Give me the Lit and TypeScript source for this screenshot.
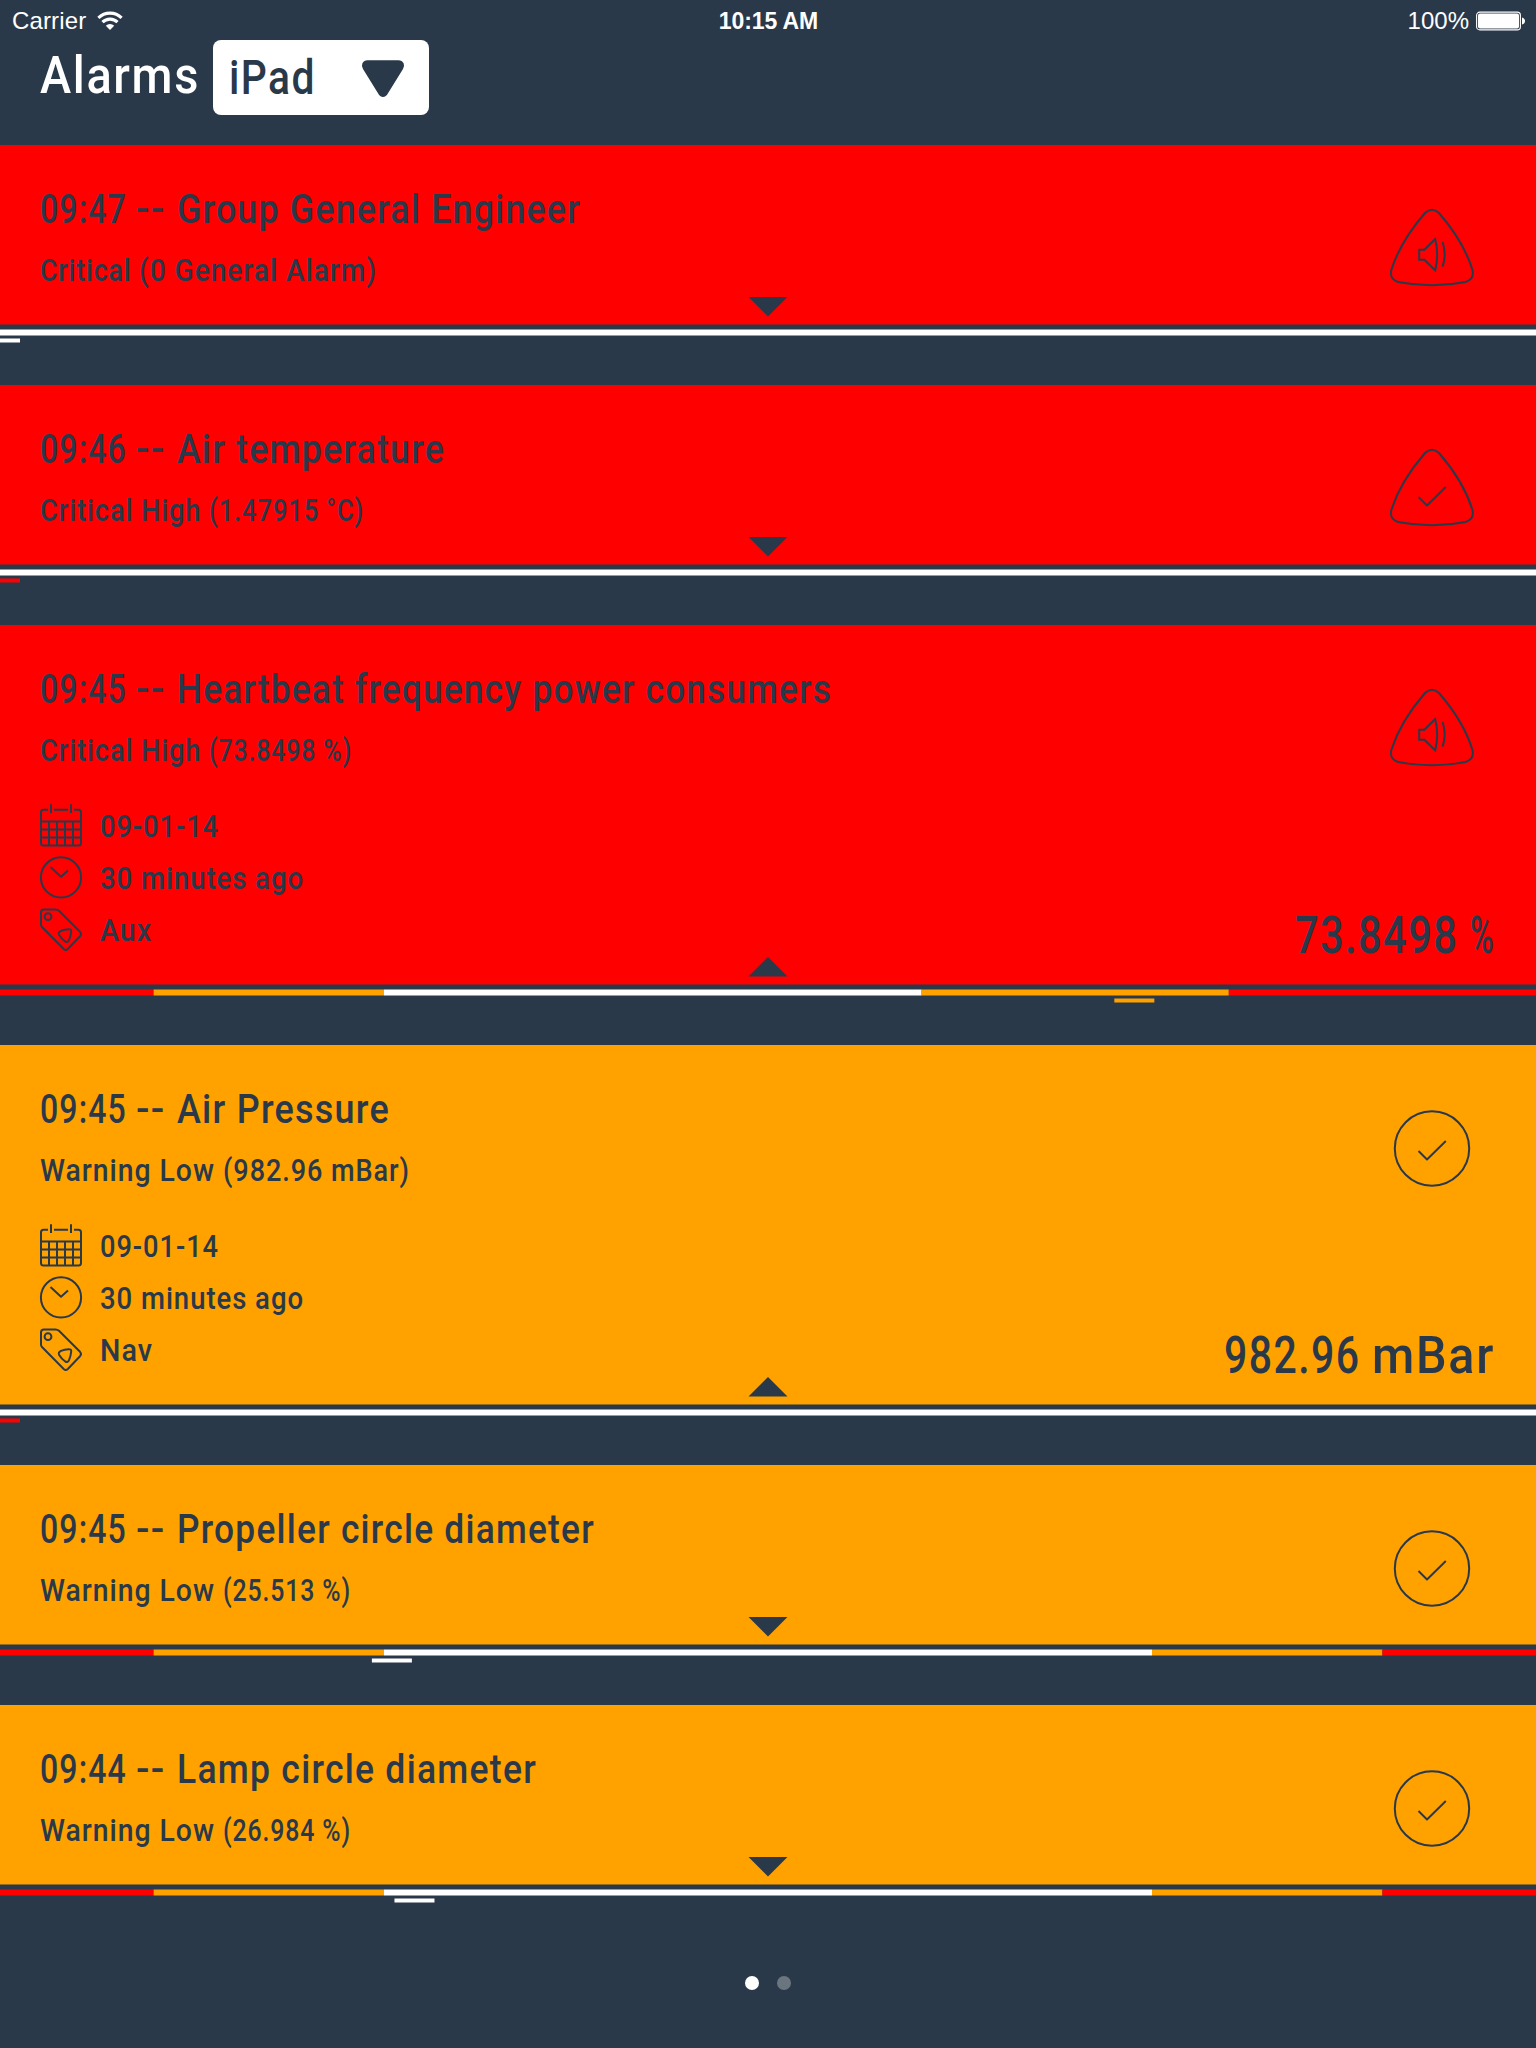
import { LitElement, html, svg, css, nothing } from "lit";
import { customElement, property } from "lit/decorators.js";

const NAVY = "#2a394a";
const RED = "#ff0000";
const ORANGE = "#ffa200";
const WHITE = "#ffffff";

type Level = "critical" | "warning";
type Glyph = "sound" | "check";
type Segment = [end: number, color: string];
type Part = [text: string, width: number];

interface Alarm {
  level: Level;
  glyph: Glyph;
  title: Part[];
  detail: Part[];
  segments: Segment[];
  marker: number;
  markerColor: string;
  tag?: Part[];
  value?: Part[];
}

const PLAIN: Segment[] = [[100, WHITE]];
const LOAD: Segment[] = [[10, RED], [25, ORANGE], [60, WHITE], [80, ORANGE], [100, RED]];
const CIRCLE: Segment[] = [[10, RED], [25, ORANGE], [75, WHITE], [90, ORANGE], [100, RED]];

const titled = (time: string, name: string, width: number): Part[] => [
  [`${time} `, 96],
  ["-- ", 41],
  [name, width],
];

const ALARMS: Alarm[] = [
  { level: "critical", glyph: "sound", title: titled("09:47", "Group General Engineer", 404), detail: [["Critical ", 99], ["(0 General Alarm)", 238]], segments: PLAIN, marker: 0, markerColor: WHITE },
  { level: "critical", glyph: "check", title: titled("09:46", "Air temperature", 268), detail: [["Critical High ", 169], ["(1.47915 °C)", 155]], segments: PLAIN, marker: 0, markerColor: RED },
  { level: "critical", glyph: "sound", title: titled("09:45", "Heartbeat frequency power consumers", 655), detail: [["Critical High ", 169], ["(73.8498 %)", 143]], segments: LOAD, marker: 73.8498, markerColor: ORANGE, tag: [["Aux", 52]], value: [["73.8498 ", 175], ["%", 25]] },
  { level: "warning", glyph: "check", title: titled("09:45", "Air Pressure", 213), detail: [["Warning Low ", 183], ["(982.96 mBar)", 187]], segments: PLAIN, marker: 0, markerColor: RED, tag: [["Nav", 53]], value: [["982.96 ", 148], ["mBar", 123]] },
  { level: "warning", glyph: "check", title: titled("09:45", "Propeller circle diameter", 418), detail: [["Warning Low ", 183], ["(25.513 %)", 128]], segments: CIRCLE, marker: 25.513, markerColor: WHITE },
  { level: "warning", glyph: "check", title: titled("09:44", "Lamp circle diameter", 360), detail: [["Warning Low ", 183], ["(26.984 %)", 128]], segments: CIRCLE, marker: 26.984, markerColor: WHITE },
];

/** Sets a line of text in parts, each condensed or widened to its own width. */
@customElement("fit-text")
class FitText extends LitElement {
  @property({ attribute: false }) parts: Part[] = [];

  static styles = css`
    :host { display: flex; white-space: pre; }
    .part { flex: none; }
    .line { display: inline-block; transform-origin: 0 50%; letter-spacing: 0.035em; }
  `;

  render() {
    return html`${this.parts.map(([text]) => html`<div class="part"><span class="line">${text}</span></div>`)}`;
  }

  updated() {
    this.renderRoot.querySelectorAll<HTMLElement>(".line").forEach((line, i) => {
      const width = this.parts[i][1];
      line.style.transform = "none";
      line.style.transform = `scaleX(${width / line.getBoundingClientRect().width})`;
      line.parentElement!.style.width = `${width}px`;
    });
  }
}

@customElement("alarm-card")
class AlarmCard extends LitElement {
  @property({ attribute: false }) alarm!: Alarm;

  static styles = css`
    :host { display: block; color: #2a394a; }
    .body { position: relative; box-sizing: border-box; height: 179px; padding: 41px 41px 0 40px; }
    .body.open { height: 359px; }
    .critical { background: #ff0000; }
    .warning { background: #ffa200; }
    .head { display: flex; justify-content: space-between; }
    .title { font-size: 40px; line-height: 48px; }
    .detail { font-size: 32px; line-height: 40px; margin-top: 16px; }
    .status { width: 84px; height: 84px; margin: 20px 21px 0 0; overflow: visible; }
    .more { display: flex; justify-content: space-between; align-items: flex-start; margin-top: 30px; }
    .row { display: flex; align-items: center; gap: 18px; height: 52px; font-size: 32px; line-height: 52px; }
    .row svg { width: 42px; height: 44px; overflow: visible; }
    .value { font-size: 52px; line-height: 60px; margin-top: 106px; }
    .arrow { position: absolute; left: 50%; bottom: 7px; width: 40px; height: 20px; margin-left: -20px; display: block; }
    .gauge { display: block; width: 1536px; height: 61px; }
    .line-art { fill: none; stroke: #2a394a; stroke-width: 2; stroke-linecap: butt; stroke-linejoin: round; }
  `;

  private statusIcon(a: Alarm) {
    const critical = a.level === "critical";
    return html`<svg class="status line-art" viewBox="0 0 84 84">
      ${critical
        ? svg`<path d="M35 7 Q42 0.5 49 7 C62 22 76 43 82.5 64 Q84.5 73 75.5 76 Q42 82.6 8 76 Q-0.8 73 1.3 64 C8 43 22 22 35 7 Z"/>`
        : svg`<circle cx="42" cy="42.5" r="37.2"/>`}
      ${a.glyph === "sound"
        ? svg`<path stroke-linejoin="miter" d="M29.2 43.7 H34.4 L45.2 33 Q49.2 48.7 45.2 64.4 L34.4 53.7 H29.2 Z"/><path d="M52.6 36 Q56.8 48.5 52.6 60.7"/>`
        : critical
          ? svg`<path d="M28.5 51 L37 59.5 L55.8 41"/>`
          : svg`<path d="M28.5 45 L37 53.5 L55.8 35"/>`}
    </svg>`;
  }

  private more(a: Alarm) {
    return html`<div class="more">
      <div>
        <div class="row">
          <svg class="line-art" viewBox="0 0 42 44"><path d="M8 5.7 H3.5 Q1 5.7 1 8.2 V38.9 Q1 41.4 3.5 41.4 H38.5 Q41 41.4 41 38.9 V8.2 Q41 5.7 38.5 5.7 H34 M14 5.7 H28 M11 0.3 V9 M31 0.3 V9 M1 17.5 H41 M1 25.4 H41 M1 33.5 H41 M9 17.5 V41.4 M17 17.5 V41.4 M25 17.5 V41.4 M33 17.5 V41.4"/></svg>
          <fit-text .parts=${[["09-01-14", 119]]}></fit-text>
        </div>
        <div class="row">
          <svg class="line-art" viewBox="0 0 42 44"><circle cx="21" cy="21.4" r="20.1"/><path d="M10.5 11 L21 20.8 L28 14.5"/></svg>
          <fit-text .parts=${[["30 minutes ago", 204]]}></fit-text>
        </div>
        <div class="row">
          <svg class="line-art" viewBox="0 0 42 44"><path d="M4 1.4 H15.5 Q17.5 1.4 19 2.8 L40 23.8 Q42 26 40 28.2 L27.8 41 Q25.8 43 23.7 41 L2 19 Q1 18 1 16.5 V4.4 Q1 1.4 4 1.4 Z"/><circle cx="8" cy="8.7" r="3.4"/><path d="M21 22.8 Q25 21 29.3 21.2 Q31.5 21.2 31.2 23.5 Q30.8 28 29 32.2 Q27.8 34.8 25.3 33.5 Q21.5 31 19.2 27 Q17.8 24.4 21 22.8 Z"/></svg>
          <fit-text .parts=${a.tag}></fit-text>
        </div>
      </div>
      <fit-text class="value" .parts=${a.value}></fit-text>
    </div>`;
  }

  private gauge(a: Alarm) {
    const px = (percent: number) => (percent / 100) * 1536;
    return html`<svg class="gauge" viewBox="0 0 1536 61">
      <rect width="1536" height="0.5" fill=${a.level === "critical" ? RED : ORANGE}></rect>
      ${a.segments.map(([end, color], i) => {
        const start = i ? a.segments[i - 1][0] : 0;
        return svg`<rect x=${px(start)} y="5.5" width=${px(end - start)} height="6" fill=${color}/>`;
      })}
      <rect x=${px(a.marker) - 20} y="14.5" width="40" height="4" fill=${a.markerColor}></rect>
    </svg>`;
  }

  render() {
    const a = this.alarm;
    const open = a.value !== undefined;
    return html`
      <div class="body ${a.level} ${open ? "open" : ""}">
        <div class="head">
          <div>
            <fit-text class="title" .parts=${a.title}></fit-text>
            <fit-text class="detail" .parts=${a.detail}></fit-text>
          </div>
          ${this.statusIcon(a)}
        </div>
        ${open ? this.more(a) : nothing}
        <svg class="arrow" viewBox="0 0 40 20"><path fill=${NAVY} d=${open ? "M0.5 19.5 H39.5 L20 0 Z" : "M0.5 0 H39.5 L20 19.5 Z"}/></svg>
      </div>
      ${this.gauge(a)}
    `;
  }
}

@customElement("app-root")
class AppRoot extends LitElement {
  static styles = css`
    :host {
      display: flex; flex-direction: column; width: 1536px; height: 2048px; overflow: hidden;
      background: #2a394a; color: #fff; font-family: Roboto, "Liberation Sans", sans-serif; font-weight: 500;
    }
    .statusbar {
      display: grid; grid-template-columns: 1fr auto 1fr; align-items: center; height: 40px;
      padding: 0 11px 0 12px; box-sizing: border-box;
      font: 400 24px/40px "Liberation Sans", sans-serif;
    }
    .statusbar span { padding-top: 1px; }
    .left, .right { display: flex; align-items: center; }
    .left { gap: 11px; letter-spacing: 0.15px; }
    .right { justify-content: flex-end; gap: 7px; }
    .time { font-weight: 700; font-size: 23px; letter-spacing: -0.1px; }
    .header { display: flex; height: 105px; padding-left: 40px; align-items: flex-start; }
    .heading { font-size: 52px; line-height: 60px; margin-top: 6px; }
    .select {
      display: flex; justify-content: space-between; align-items: flex-start; box-sizing: border-box;
      width: 216px; height: 75px; margin-left: 13px; padding: 8px 23px 0 16px;
      border-radius: 8px; background: #fff; color: #2a394a; font-size: 48px; line-height: 60px;
    }
    .select svg { width: 44px; height: 38px; margin: 12px 1px 0 0; }
    .dots { display: flex; justify-content: center; gap: 18px; padding: 31px 0 0; }
    .dot { width: 14px; height: 14px; border-radius: 50%; background: #6b7580; }
    .dot.on { background: #fff; }
  `;

  render() {
    return html`
      <div class="statusbar">
        <div class="left">
          <span>Carrier</span>
          <svg width="26" height="20" viewBox="0 0 26 20">
            <g fill="none" stroke="#fff" stroke-width="3.1"><path d="M1.4 6.9 A16.5 16.5 0 0 1 24.6 6.9"/><path d="M5.5 11.2 A10.6 10.6 0 0 1 20.5 11.2"/></g>
            <path fill="#fff" d="M13 19 L8.8 14.8 A6 6 0 0 1 17.2 14.8 Z"/>
          </svg>
        </div>
        <span class="time">10:15 AM</span>
        <div class="right">
          <span>100%</span>
          <svg width="49" height="20" viewBox="0 0 49 20">
            <rect x="0.6" y="1.1" width="43.8" height="17.8" rx="3.2" fill="none" stroke="#fff" stroke-width="1.1"/>
            <rect x="2" y="2.5" width="41" height="15" rx="2" fill="#fff"/>
            <path fill="#fff" d="M46 6.5 Q49 7.5 49 10 Q49 12.5 46 13.5 Z"/>
          </svg>
        </div>
      </div>
      <div class="header">
        <fit-text class="heading" .parts=${[["Alarms", 160]]}></fit-text>
        <div class="select">
          <fit-text .parts=${[["iPad", 87]]}></fit-text>
          <svg viewBox="0 0 44 38"><path fill="#2a394a" d="M6.5 0.3 H37.5 Q41 0.3 42.6 3.3 Q43.8 6 42 9 L27 33.2 Q25 37 22 37 Q19 37 17 33.2 L2 9 Q0.2 6 1.4 3.3 Q3 0.3 6.5 0.3 Z"/></svg>
        </div>
      </div>
      ${ALARMS.map((a) => html`<alarm-card .alarm=${a}></alarm-card>`)}
      <div class="dots"><span class="dot on"></span><span class="dot"></span></div>
    `;
  }
}
